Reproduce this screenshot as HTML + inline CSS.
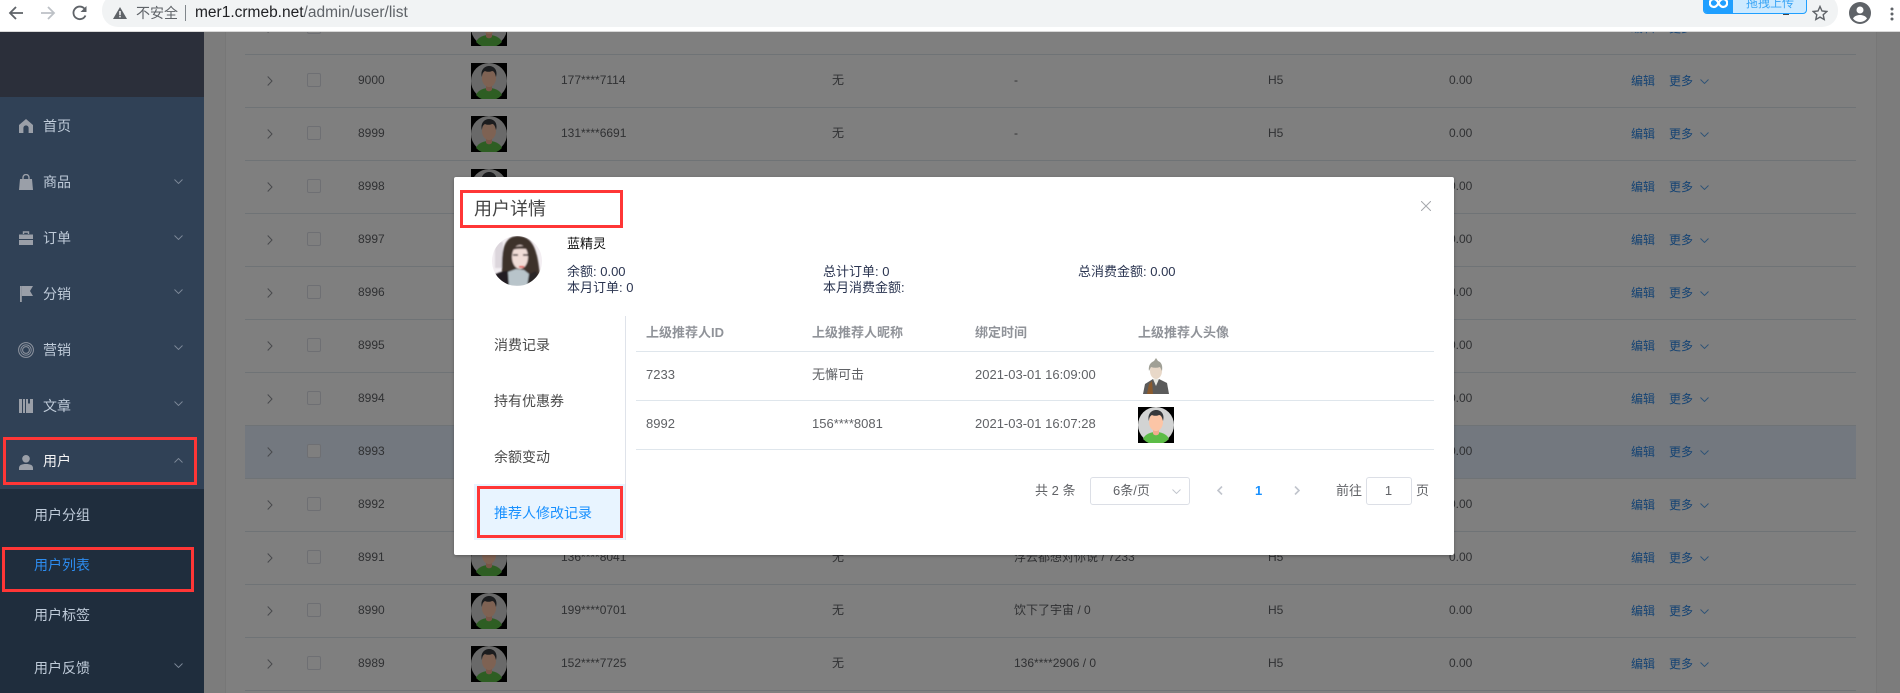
<!DOCTYPE html>
<html lang="zh-CN">
<head>
<meta charset="utf-8">
<title>用户列表</title>
<style>
*{box-sizing:border-box}
html,body{margin:0;padding:0;width:1900px;height:693px;overflow:hidden;background:#fff}
body{position:relative;font-family:"Liberation Sans","Noto Sans CJK SC",sans-serif;color:#606266}
.t{position:absolute;white-space:nowrap;line-height:20px;height:20px}
.abs{position:absolute}
#main{position:absolute;left:204px;top:32px;width:1696px;height:661px;background:#f8f8f9;overflow:hidden}
.r{position:absolute;left:245px;width:1611px;height:53px;border-bottom:1px solid #dfe6ec;font-size:12px;color:#606266}
.r.h{background:#e6f1ff}
.r .t{top:15px}
.r .cb{position:absolute;left:62px;top:18px;width:14px;height:14px;border:1px solid #dcdfe6;border-radius:2px;background:#fff}
.r .ex{position:absolute;left:22px;top:21px;width:6px;height:10px}
.r .av{position:absolute;left:226px;top:8px;width:36px;height:36px}
.r .a{color:#2a86e6;top:16px}
.r .dn{position:absolute;left:1455px;top:24px;width:9px;height:5px;color:#5aa4ec}
.ol{position:absolute;left:204px;top:0;width:1696px;height:693px;background:rgba(0,0,0,.5)}
#side{position:absolute;left:0;top:0;width:204px;height:693px;background:#304156;overflow:hidden}
#logo{position:absolute;left:0;top:32px;width:204px;height:65px;background:#2b2f3a}
#sub{position:absolute;left:0;top:489px;width:204px;height:204px;background:#1f2d3d}
.m{font-size:14px;color:#bfcbd9}
.ic{position:absolute;left:18px}
.ch{position:absolute;left:174px;width:9px;height:5px;color:#7d8999}
.rb{position:absolute;border:3px solid #ff3636;pointer-events:none}
#chrome{position:absolute;left:0;top:0;width:1900px;height:32px;background:#fff;border-bottom:1px solid #d8d8d8;overflow:hidden}
#omni{position:absolute;left:102px;top:-6px;width:1736px;height:33px;background:#f1f3f4;border-radius:16px}
#modal{position:absolute;left:454px;top:177px;width:1000px;height:378px;background:#fff;border-radius:2px;box-shadow:0 1px 3px rgba(0,0,0,.3)}
.hd{font-size:13px;color:#909399;font-weight:bold}
.cell{font-size:13px;color:#606266}
.tb{font-size:14px;color:#4a4a4a}
.ln{position:absolute;left:182px;width:798px;height:1px;background:#dfe6ec}
.st{font-size:13px;color:#2a3450}
</style>
</head>
<body>
<svg width="0" height="0" style="position:absolute">
<symbol id="ava" viewBox="0 0 36 36">
<rect width="36" height="36" fill="#000"/>
<circle cx="18" cy="18" r="18" fill="#d2d3d3"/>
<path d="M5 32c2-5 8-7 13-7s11 2 13 7a18 18 0 0 1-26 0z" fill="#5cbc47"/>
<path d="M15 20h6v6c0 3-6 3-6 0z" fill="#f2ab8e"/>
<ellipse cx="18" cy="15" rx="7" ry="9" fill="#fcc5a6"/>
<path d="M11 14c-2-6 2-11 7-11s9 4 7 11c-1-4-2-6-4-6-2 1-5 1-7 0-2 1-3 3-3 6z" fill="#37393c"/>
</symbol>
<symbol id="dn" viewBox="0 0 9 5"><path d="M.5.5 4.500 4.500 8.500.5" fill="none" stroke="currentColor" stroke-width=".9"/></symbol>
<symbol id="rt" viewBox="0 0 6 10"><path d="M.7.5 5 5 .7 9.500" fill="none" stroke="#909399" stroke-width="1"/></symbol>
</svg>

<div id="main">
  <div class="abs" style="left:21px;top:0;width:1652px;height:661px;background:#fff;border-left:1px solid #eee;border-right:1px solid #eee"></div>
</div>

<div class="r" style="top:2px"><svg class="ex"><use href="#rt"/></svg><i class="cb"></i><svg class="av"><use href="#ava"/></svg><span class="t a" style="left:1386px">编辑</span><span class="t a" style="left:1424px">更多</span></div>

<div class="r" style="top:55px"><svg class="ex"><use href="#rt"/></svg><i class="cb"></i><span class="t" style="left:113px">9000</span><svg class="av"><use href="#ava"/></svg><span class="t" style="left:316px">177****7114</span><span class="t" style="left:587px">无</span><span class="t" style="left:769px">-</span><span class="t" style="left:1023px">H5</span><span class="t" style="left:1204px">0.00</span><span class="t a" style="left:1386px">编辑</span><span class="t a" style="left:1424px">更多</span><svg class="dn"><use href="#dn"/></svg></div>

<div class="r" style="top:108px"><svg class="ex"><use href="#rt"/></svg><i class="cb"></i><span class="t" style="left:113px">8999</span><svg class="av"><use href="#ava"/></svg><span class="t" style="left:316px">131****6691</span><span class="t" style="left:587px">无</span><span class="t" style="left:769px">-</span><span class="t" style="left:1023px">H5</span><span class="t" style="left:1204px">0.00</span><span class="t a" style="left:1386px">编辑</span><span class="t a" style="left:1424px">更多</span><svg class="dn"><use href="#dn"/></svg></div>

<div class="r" style="top:161px"><svg class="ex"><use href="#rt"/></svg><i class="cb"></i><span class="t" style="left:113px">8998</span><svg class="av"><use href="#ava"/></svg><span class="t" style="left:1204px">0.00</span><span class="t a" style="left:1386px">编辑</span><span class="t a" style="left:1424px">更多</span><svg class="dn"><use href="#dn"/></svg></div>

<div class="r" style="top:214px"><svg class="ex"><use href="#rt"/></svg><i class="cb"></i><span class="t" style="left:113px">8997</span><span class="t" style="left:1204px">0.00</span><span class="t a" style="left:1386px">编辑</span><span class="t a" style="left:1424px">更多</span><svg class="dn"><use href="#dn"/></svg></div>

<div class="r" style="top:267px"><svg class="ex"><use href="#rt"/></svg><i class="cb"></i><span class="t" style="left:113px">8996</span><span class="t" style="left:1204px">0.00</span><span class="t a" style="left:1386px">编辑</span><span class="t a" style="left:1424px">更多</span><svg class="dn"><use href="#dn"/></svg></div>

<div class="r" style="top:320px"><svg class="ex"><use href="#rt"/></svg><i class="cb"></i><span class="t" style="left:113px">8995</span><span class="t" style="left:1204px">0.00</span><span class="t a" style="left:1386px">编辑</span><span class="t a" style="left:1424px">更多</span><svg class="dn"><use href="#dn"/></svg></div>

<div class="r" style="top:373px"><svg class="ex"><use href="#rt"/></svg><i class="cb"></i><span class="t" style="left:113px">8994</span><span class="t" style="left:1204px">0.00</span><span class="t a" style="left:1386px">编辑</span><span class="t a" style="left:1424px">更多</span><svg class="dn"><use href="#dn"/></svg></div>

<div class="r h" style="top:426px"><svg class="ex"><use href="#rt"/></svg><i class="cb"></i><span class="t" style="left:113px">8993</span><span class="t" style="left:1204px">0.00</span><span class="t a" style="left:1386px">编辑</span><span class="t a" style="left:1424px">更多</span><svg class="dn"><use href="#dn"/></svg></div>

<div class="r" style="top:479px"><svg class="ex"><use href="#rt"/></svg><i class="cb"></i><span class="t" style="left:113px">8992</span><span class="t" style="left:1204px">0.00</span><span class="t a" style="left:1386px">编辑</span><span class="t a" style="left:1424px">更多</span><svg class="dn"><use href="#dn"/></svg></div>

<div class="r" style="top:532px"><svg class="ex"><use href="#rt"/></svg><i class="cb"></i><span class="t" style="left:113px">8991</span><svg class="av"><use href="#ava"/></svg><span class="t" style="left:316px">136****8041</span><span class="t" style="left:587px">无</span><span class="t" style="left:769px">浮云都想对你说 / 7233</span><span class="t" style="left:1023px">H5</span><span class="t" style="left:1204px">0.00</span><span class="t a" style="left:1386px">编辑</span><span class="t a" style="left:1424px">更多</span><svg class="dn"><use href="#dn"/></svg></div>

<div class="r" style="top:585px"><svg class="ex"><use href="#rt"/></svg><i class="cb"></i><span class="t" style="left:113px">8990</span><svg class="av"><use href="#ava"/></svg><span class="t" style="left:316px">199****0701</span><span class="t" style="left:587px">无</span><span class="t" style="left:769px">饮下了宇宙 / 0</span><span class="t" style="left:1023px">H5</span><span class="t" style="left:1204px">0.00</span><span class="t a" style="left:1386px">编辑</span><span class="t a" style="left:1424px">更多</span><svg class="dn"><use href="#dn"/></svg></div>

<div class="r" style="top:638px"><svg class="ex"><use href="#rt"/></svg><i class="cb"></i><span class="t" style="left:113px">8989</span><svg class="av"><use href="#ava"/></svg><span class="t" style="left:316px">152****7725</span><span class="t" style="left:587px">无</span><span class="t" style="left:769px">136****2906 / 0</span><span class="t" style="left:1023px">H5</span><span class="t" style="left:1204px">0.00</span><span class="t a" style="left:1386px">编辑</span><span class="t a" style="left:1424px">更多</span><svg class="dn"><use href="#dn"/></svg></div>

<div class="ol"></div>

<div id="side">
  <div id="logo"></div>
  <div id="sub"></div>

  <svg class="ic" style="top:119px;left:19px" width="14" height="14" viewBox="0 0 14 14"><path d="M0 6 7 0l7 6v8H9.600V9a2.600 2.600 0 0 0-5.200 0v5H0z" fill="#9a9fa8"/></svg>
  <span class="t m" style="left:43px;top:116px">首页</span>

  <svg class="ic" style="top:174px;left:19px" width="14" height="16" viewBox="0 0 14 16"><path d="M1 5h12l1 11H0z" fill="#9a9fa8"/><path d="M4 7V3.500a3 3 0 0 1 6 0V7" fill="none" stroke="#9a9fa8" stroke-width="1.400"/></svg>
  <span class="t m" style="left:43px;top:172px">商品</span>
  <svg class="ch" style="top:179px"><use href="#dn"/></svg>

  <svg class="ic" style="top:231px;left:19px" width="14" height="14" viewBox="0 0 14 14"><path d="M4.500 3V1h5v2" fill="none" stroke="#9a9fa8" stroke-width="1.400"/><path d="M0 3.500h14V8H0zM0 9h14v5H0z" fill="#9a9fa8"/></svg>
  <span class="t m" style="left:43px;top:228px">订单</span>
  <svg class="ch" style="top:235px"><use href="#dn"/></svg>

  <svg class="ic" style="top:286px;left:20px" width="14" height="16" viewBox="0 0 14 16"><path d="M0 0h1.800v16H0z" fill="#9a9fa8"/><path d="M1.800 0H13l-3 5 3 5H1.800z" fill="#9a9fa8"/></svg>
  <span class="t m" style="left:43px;top:284px">分销</span>
  <svg class="ch" style="top:289px"><use href="#dn"/></svg>

  <svg class="ic" style="top:342px" width="16" height="16" viewBox="0 0 16 16" fill="none" stroke="#8f95a0"><circle cx="8" cy="8" r="7.400"/><circle cx="8" cy="8" r="5.200" stroke-width=".8"/><circle cx="8" cy="8" r="3.400" stroke-width="1"/></svg>
  <span class="t m" style="left:43px;top:340px">营销</span>
  <svg class="ch" style="top:345px"><use href="#dn"/></svg>

  <svg class="ic" style="top:399px;left:19px" width="14" height="14" viewBox="0 0 14 14"><path d="M0 0h3v14H0zM4 0h2v14H4zM7 0h2v5l1-1 1 1V0h3v14H7z" fill="#9a9fa8"/></svg>
  <span class="t m" style="left:43px;top:396px">文章</span>
  <svg class="ch" style="top:401px"><use href="#dn"/></svg>

  <svg class="ic" style="top:455px;left:19px" width="14" height="15" viewBox="0 0 14 15"><circle cx="7" cy="3.800" r="3.800" fill="#9a9fa8"/><path d="M0 15v-2c0-3 3-4 7-4s7 1 7 4v2z" fill="#9a9fa8"/></svg>
  <span class="t m" style="left:43px;top:451px;color:#f4f4f5">用户</span>
  <svg class="ch" style="top:458px;transform:scaleY(-1)"><use href="#dn"/></svg>

  <span class="t m" style="left:34px;top:505px">用户分组</span>
  <span class="t m" style="left:34px;top:555px;color:#2d8cf0">用户列表</span>
  <span class="t m" style="left:34px;top:605px">用户标签</span>
  <span class="t m" style="left:34px;top:658px">用户反馈</span>
  <svg class="ch" style="top:663px"><use href="#dn"/></svg>

  <div class="rb" style="left:3px;top:437px;width:194px;height:48px"></div>
  <div class="rb" style="left:2px;top:547px;width:192px;height:45px"></div>
</div>

<div id="modal">
  <span class="t" style="left:20px;top:22px;font-size:18px;color:#444;height:20px">用户详情</span>
  <svg class="abs" style="left:967px;top:24px" width="10" height="10" viewBox="0 0 10 10"><path d="M0 0l10 10M10 0 0 10" stroke="#a5a8ad" stroke-width="1" fill="none"/></svg>

  <svg class="abs" style="left:38px;top:59px" width="50" height="50" viewBox="0 0 50 50">
    <defs>
      <clipPath id="cc"><circle cx="25" cy="25" r="25"/></clipPath>
      <filter id="bl" x="-5%" y="-5%" width="110%" height="110%"><feGaussianBlur stdDeviation=".7"/></filter>
    </defs>
    <g clip-path="url(#cc)">
      <rect width="50" height="50" fill="#f3eef2"/>
      <g filter="url(#bl)">
        <rect x="3" y="6" width="8" height="26" fill="#dcd6dc"/>
        <path d="M10 40C10 24 8 0 26 0c18 0 20 22 22 40l-10 4H14z" fill="#3d302c"/>
        <path d="M0 50V40c5-3 10-5 16-5l6 15z" fill="#241e20"/>
        <path d="M34 50l3-12 7-3 6 15z" fill="#2c2527"/>
        <ellipse cx="28" cy="21" rx="8" ry="12" fill="#f0dcd6"/>
        <path d="M20 14c2-4 12-6 17-1-5 0-11-1-17 1z" fill="#3d302c"/>
        <path d="M21 19h5M31 19h5" stroke="#3d3030" stroke-width="1.400"/>
        <path d="M27 30h5v1.600h-5z" fill="#e03a38"/>
        <path d="M16 36l8-3 8 1 5 4-2 12H17z" fill="#b8c4ca"/>
      </g>
    </g>
  </svg>

  <span class="t" style="left:113px;top:57px;font-size:13px;color:#111">蓝精灵</span>
  <span class="t st" style="left:113px;top:85px">余额: 0.00</span>
  <span class="t st" style="left:113px;top:101px">本月订单: 0</span>
  <span class="t st" style="left:369px;top:85px">总计订单: 0</span>
  <span class="t st" style="left:369px;top:101px">本月消费金额:</span>
  <span class="t st" style="left:624px;top:85px">总消费金额: 0.00</span>

  <div class="abs" style="left:20px;top:307px;width:152px;height:56px;background:#e8f4ff"></div>
  <div class="abs" style="left:171px;top:139px;width:1px;height:224px;background:#dfe3ea"></div>
  <span class="t tb" style="left:40px;top:158px">消费记录</span>
  <span class="t tb" style="left:40px;top:214px">持有优惠券</span>
  <span class="t tb" style="left:40px;top:270px">余额变动</span>
  <span class="t tb" style="left:40px;top:326px;color:#1890ff">推荐人修改记录</span>

  <span class="t hd" style="left:192px;top:146px">上级推荐人ID</span>
  <span class="t hd" style="left:358px;top:146px">上级推荐人昵称</span>
  <span class="t hd" style="left:521px;top:146px">绑定时间</span>
  <span class="t hd" style="left:684px;top:146px">上级推荐人头像</span>
  <div class="ln" style="top:174px"></div>

  <span class="t cell" style="left:192px;top:188px">7233</span>
  <span class="t cell" style="left:358px;top:188px">无懈可击</span>
  <span class="t cell" style="left:521px;top:188px">2021-03-01 16:09:00</span>
  <svg class="abs" style="left:684px;top:181px" width="36" height="36" viewBox="0 0 36 36">
    <path d="M5 36l2-10 8-5 6 0 8 4 2 11z" fill="#5b5b5b"/>
    <path d="M9 36l2-10 3-3 1 13z" fill="#8a5a2e"/>
    <path d="M15 21l3 7 3-7z" fill="#e8e8e2"/>
    <ellipse cx="18" cy="13" rx="6" ry="8" fill="#e8d8c8"/>
    <path d="M11 13c-1-7 3-9 5-10l2-3 2 3c3 1 5 4 4 10l-2-4c-3 1-6 1-9 0z" fill="#a0a096"/>
  </svg>
  <div class="ln" style="top:223px"></div>

  <span class="t cell" style="left:192px;top:237px">8992</span>
  <span class="t cell" style="left:358px;top:237px">156****8081</span>
  <span class="t cell" style="left:521px;top:237px">2021-03-01 16:07:28</span>
  <svg class="abs" style="left:684px;top:230px" width="36" height="36"><use href="#ava"/></svg>
  <div class="ln" style="top:272px"></div>

  <span class="t cell" style="left:581px;top:304px">共 2 条</span>
  <div class="abs" style="left:636px;top:300px;width:100px;height:28px;border:1px solid #dcdfe6;border-radius:3px"></div>
  <span class="t cell" style="left:659px;top:304px;color:#606266">6条/页</span>
  <svg class="abs" style="left:718px;top:312px;color:#c0c4cc" width="9" height="5"><use href="#dn"/></svg>
  <svg class="abs" style="left:763px;top:309px" width="6" height="9" viewBox="0 0 6 9"><path d="M5 .5 1 4.500l4 4" fill="none" stroke="#c0c4cc" stroke-width="1.600"/></svg>
  <span class="t" style="left:801px;top:304px;font-size:13px;font-weight:bold;color:#1890ff">1</span>
  <svg class="abs" style="left:840px;top:309px" width="6" height="9" viewBox="0 0 6 9"><path d="M1 .5l4 4-4 4" fill="none" stroke="#c0c4cc" stroke-width="1.600"/></svg>
  <span class="t cell" style="left:882px;top:304px">前往</span>
  <div class="abs" style="left:912px;top:300px;width:46px;height:28px;border:1px solid #dcdfe6;border-radius:3px"></div>
  <span class="t cell" style="left:930px;top:304px;width:9px;text-align:center">1</span>
  <span class="t cell" style="left:962px;top:304px">页</span>

  <div class="rb" style="left:6px;top:13px;width:163px;height:38px"></div>
  <div class="rb" style="left:23px;top:309px;width:146px;height:52px"></div>
</div>

<div id="chrome">
  <svg class="abs" style="left:8px;top:5px" width="16" height="16" viewBox="0 0 16 16"><path d="M15 8H2M8 2 2 8l6 6" fill="none" stroke="#5f6368" stroke-width="1.800"/></svg>
  <svg class="abs" style="left:40px;top:5px" width="16" height="16" viewBox="0 0 16 16"><path d="M1 8h13M8 2l6 6-6 6" fill="none" stroke="#bdc1c6" stroke-width="1.800"/></svg>
  <svg class="abs" style="left:72px;top:5px" width="16" height="16" viewBox="0 0 16 16"><path d="M13.500 10.500A6.300 6.300 0 1 1 12.500 3.700" fill="none" stroke="#5f6368" stroke-width="1.800"/><path d="M14.500 1v6h-6z" fill="#5f6368"/></svg>
  <div id="omni"></div>
  <svg class="abs" style="left:113px;top:7px" width="14" height="12" viewBox="0 0 14 12"><path d="M7 0l7 12H0z" fill="#5f6368"/><path d="M6.300 4h1.400v4.200H6.300zM6.300 9h1.400v1.400H6.300z" fill="#fff"/></svg>
  <span class="t" style="left:136px;top:3px;font-size:14px;color:#5f6368">不安全</span>
  <div class="abs" style="left:185px;top:5px;width:1px;height:16px;background:#80868b"></div>
  <span class="t" style="left:195px;top:3px;font-size:15.500px;color:#5f6368"><span style="color:#202124">mer1.crmeb.net</span>/admin/user/list</span>
  <svg class="abs" style="left:1812px;top:5px" width="16" height="16" viewBox="0 0 16 16"><path d="M8 1.500l2 4.500 4.800.5-3.600 3.200 1 4.800L8 12.100l-4.200 2.400 1-4.800L1.200 6.500 6 6z" fill="none" stroke="#5f6368" stroke-width="1.400"/></svg>
  <svg class="abs" style="left:1849px;top:2px" width="22" height="22" viewBox="0 0 22 22"><circle cx="11" cy="11" r="11" fill="#5f6368"/><circle cx="11" cy="8" r="3.500" fill="#fff"/><path d="M4 16.500c1.500-2.500 4-3.500 7-3.500s5.500 1 7 3.500A9 9 0 0 1 11 20a9 9 0 0 1-7-3.500z" fill="#fff"/></svg>
  <svg class="abs" style="left:1890px;top:7px" width="4" height="14" viewBox="0 0 4 14"><circle cx="2" cy="2" r="1.500" fill="#5f6368"/><circle cx="2" cy="7" r="1.500" fill="#5f6368"/><circle cx="2" cy="12" r="1.500" fill="#5f6368"/></svg>
  <div class="abs" style="left:1783px;top:12px;width:6px;height:3px;background:#444"></div>
  <div class="abs" style="left:1703px;top:-6px;width:104px;height:20px;border-radius:0 0 4px 4px;background:#cdeaff;border:1px solid #1f9fff;overflow:hidden">
    <div class="abs" style="left:-1px;top:-1px;width:30px;height:20px;background:#1f9fff"></div>
    <svg class="abs" style="left:5px;top:1px" width="19" height="14" viewBox="0 0 19 14"><path d="M9.500 7C8 4 6.500 3 4.800 3a4 4 0 0 0 0 8C6.500 11 8 10 9.500 7c1.500-3 3-4 4.700-4a4 4 0 0 1 0 8C12.500 11 11 10 9.500 7z" fill="none" stroke="#fff" stroke-width="2.200"/></svg>
    <span class="t" style="left:42px;top:-2px;font-size:12px;color:#3aa5f5">拖拽上传</span>
  </div>
</div>
</body>
</html>
